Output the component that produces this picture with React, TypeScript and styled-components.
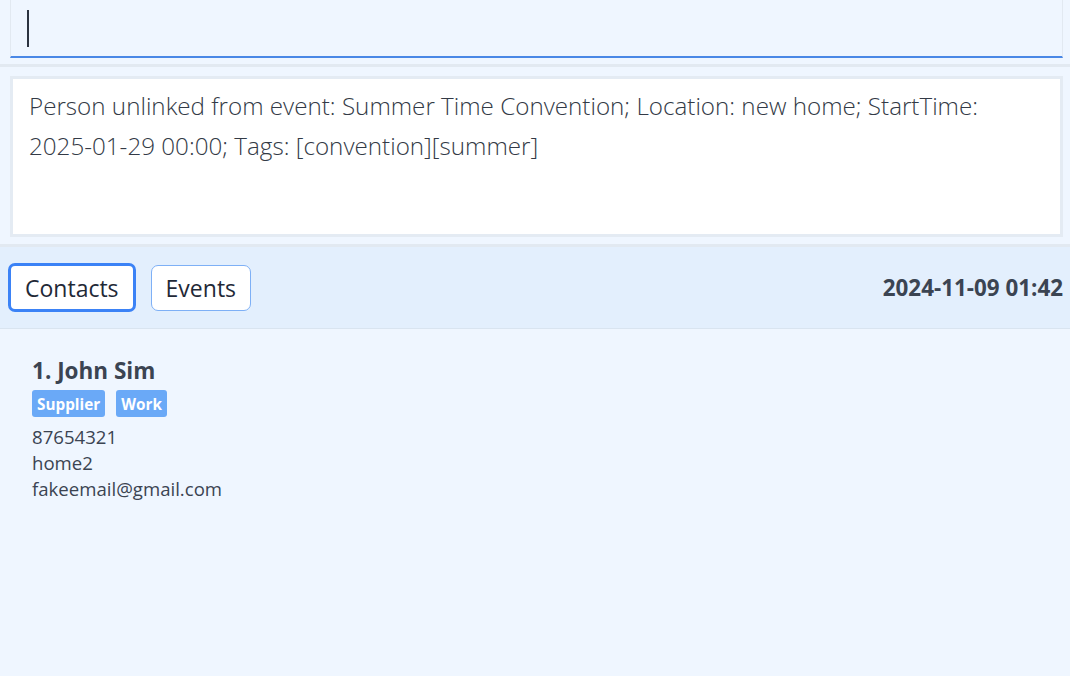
import { createGlobalStyle } from "styled-components";
import styled from "styled-components";

const GlobalStyle = createGlobalStyle`
    html, body {
        margin: 0;
        padding: 0;
        background: #eff6ff;
    }
    body {
        font-family: "Open Sans", "Noto Sans", sans-serif;
        color: #374151;
    }
`;

const Page = styled.div`
    display: flex;
    flex-direction: column;
    min-height: 100vh;
    background: #eff6ff;
`;

const CommandArea = styled.div`
    padding: 0 7px 6px 10px;
    border-bottom: 3px solid #e2e9f1;
`;

const CommandBox = styled.div`
    display: flex;
    align-items: center;
    height: 56px;
    padding-left: 16px;
    background: #eff6ff;
    border: 1px solid #e2e9f1;
    border-top: none;
    border-bottom: 2px solid #4a88e6;
`;

const Caret = styled.span`
    display: block;
    width: 1.5px;
    height: 37px;
    background: #2b3340;
`;

const ResultArea = styled.div`
    padding: 9px 7px 7px 10px;
    border-bottom: 3px solid #e2e9f1;
`;

const ResultBox = styled.div`
    box-sizing: border-box;
    height: 161px;
    padding: 7px 16px;
    background: #fff;
    border: 3px solid #e4ebf3;
    font-weight: 300;
    font-size: 24.2px;
    line-height: 40px;
    color: #333a46;
`;

const NoBreak = styled.span`
    white-space: nowrap;
`;

const Toolbar = styled.div`
    display: flex;
    align-items: center;
    height: 81px;
    padding: 0 7px 0 8px;
    background: #e3effd;
    border-bottom: 1px solid #d9e4f0;
`;

const Tab = styled.button<{ $active?: boolean }>`
    box-sizing: border-box;
    height: ${p => (p.$active ? 49 : 46)}px;
    padding: 0 14px;
    margin-right: 15px;
    background: #fff;
    border: ${p => (p.$active ? "3px solid #3b82f6" : "1.5px solid #7eb0f6")};
    border-radius: 7px;
    font-family: inherit;
    font-size: 23px;
    color: #1f2937;
    cursor: pointer;
`;

const Clock = styled.div`
    margin-left: auto;
    font-size: 22.4px;
    font-weight: 700;
    color: #3b4452;
`;

const List = styled.div`
    padding: 26px 32px;
`;

const Card = styled.div`
    display: flex;
    flex-direction: column;
`;

const Name = styled.div`
    font-size: 22.5px;
    font-weight: 700;
    line-height: 32px;
    color: #3b4452;
`;

const Tags = styled.div`
    display: flex;
    gap: 11px;
    margin: 3px 0 7px;
`;

const Tag = styled.span`
    display: inline-flex;
    align-items: center;
    height: 27px;
    padding: 0 5px;
    background: #6aa9f7;
    border-radius: 3px;
    color: #fff;
    font-size: 15.3px;
    font-weight: 700;
`;

const Field = styled.div`
    font-size: 18.6px;
    line-height: 26px;
    color: #3b4452;
`;

const contacts = [
    {
        name: "John Sim",
        tags: ["Supplier", "Work"],
        phone: "87654321",
        address: "home2",
        email: "fakeemail@gmail.com",
    },
];

export default function App() {
    return <Page>
        <GlobalStyle />
        <CommandArea>
            <CommandBox>
                <Caret />
            </CommandBox>
        </CommandArea>
        <ResultArea>
            <ResultBox>
                Person unlinked from event: Summer Time Convention; Location: new home; StartTime: <NoBreak>2025-01-29</NoBreak> 00:00; Tags: [convention][summer]
            </ResultBox>
        </ResultArea>
        <Toolbar>
            <Tab $active>Contacts</Tab>
            <Tab>Events</Tab>
            <Clock>2024-11-09 01:42</Clock>
        </Toolbar>
        <List>
            {contacts.map((c, i) => <Card key={c.name}>
                <Name>{i + 1}. {c.name}</Name>
                <Tags>
                    {c.tags.map(t => <Tag key={t}>{t}</Tag>)}
                </Tags>
                <Field>{c.phone}</Field>
                <Field>{c.address}</Field>
                <Field>{c.email}</Field>
            </Card>)}
        </List>
    </Page>
}
